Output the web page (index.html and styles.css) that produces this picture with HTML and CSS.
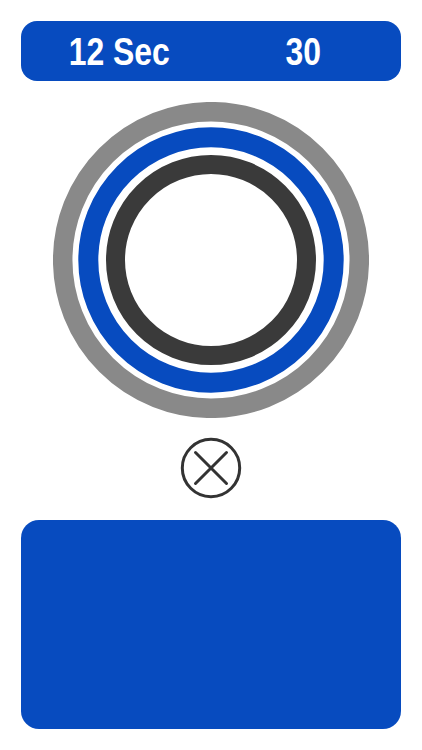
FILE: index.html
```html
<!DOCTYPE html>
<html>
<head>
<meta charset="utf-8">
<link rel="stylesheet" href="styles.css">
</head>
<body>
<div class="screen">
  <div class="topbar">
    <div class="half"><span class="label">12 Sec</span></div>
    <div class="half"><span class="label">30</span></div>
  </div>
  <div class="rings">
    <svg width="316" height="316" viewBox="0 0 316 316">
      <circle cx="158" cy="158" r="148.3" fill="none" stroke="#898989" stroke-width="19.5"/>
      <circle cx="158" cy="158" r="122.7" fill="none" stroke="#074bbf" stroke-width="20"/>
      <circle cx="158" cy="158" r="95.5" fill="none" stroke="#3a3a3a" stroke-width="19"/>
    </svg>
  </div>
  <div class="close">
    <svg width="62" height="62" viewBox="0 0 62 62">
      <circle cx="31" cy="31" r="28.7" fill="none" stroke="#333333" stroke-width="3"/>
      <path d="M15.5 15.5 L46.5 46.5 M46.5 15.5 L15.5 46.5" stroke="#333333" stroke-width="3" stroke-linecap="round"/>
    </svg>
  </div>
  <div class="panel"></div>
</div>
</body>
</html>
```

FILE: styles.css
```css
html, body {
  margin: 0;
  padding: 0;
  background: #ffffff;
}

.screen {
  width: 422px;
  height: 750px;
  box-sizing: border-box;
  padding: 21px;
  display: flex;
  flex-direction: column;
  align-items: center;
}

.topbar {
  width: 380px;
  height: 60px;
  box-sizing: border-box;
  padding: 0 6px;
  background: #074bbf;
  border-radius: 16px;
  display: flex;
  align-items: center;
}

.half {
  flex: 1;
  text-align: center;
  color: #ffffff;
  font-family: "Liberation Sans", Arial, sans-serif;
  font-weight: bold;
  font-size: 38px;
  line-height: 1;
  padding-top: 1px;
}

.label {
  display: inline-block;
  transform: scaleX(0.84);
  transform-origin: center;
}

.rings {
  margin-top: 21px;
  width: 316px;
  height: 316px;
}

.rings svg, .close svg {
  display: block;
}

.close {
  margin-top: 19px;
  width: 62px;
  height: 62px;
}

.panel {
  margin-top: 21px;
  width: 380px;
  height: 209px;
  background: #074bbf;
  border-radius: 18px;
}
```
